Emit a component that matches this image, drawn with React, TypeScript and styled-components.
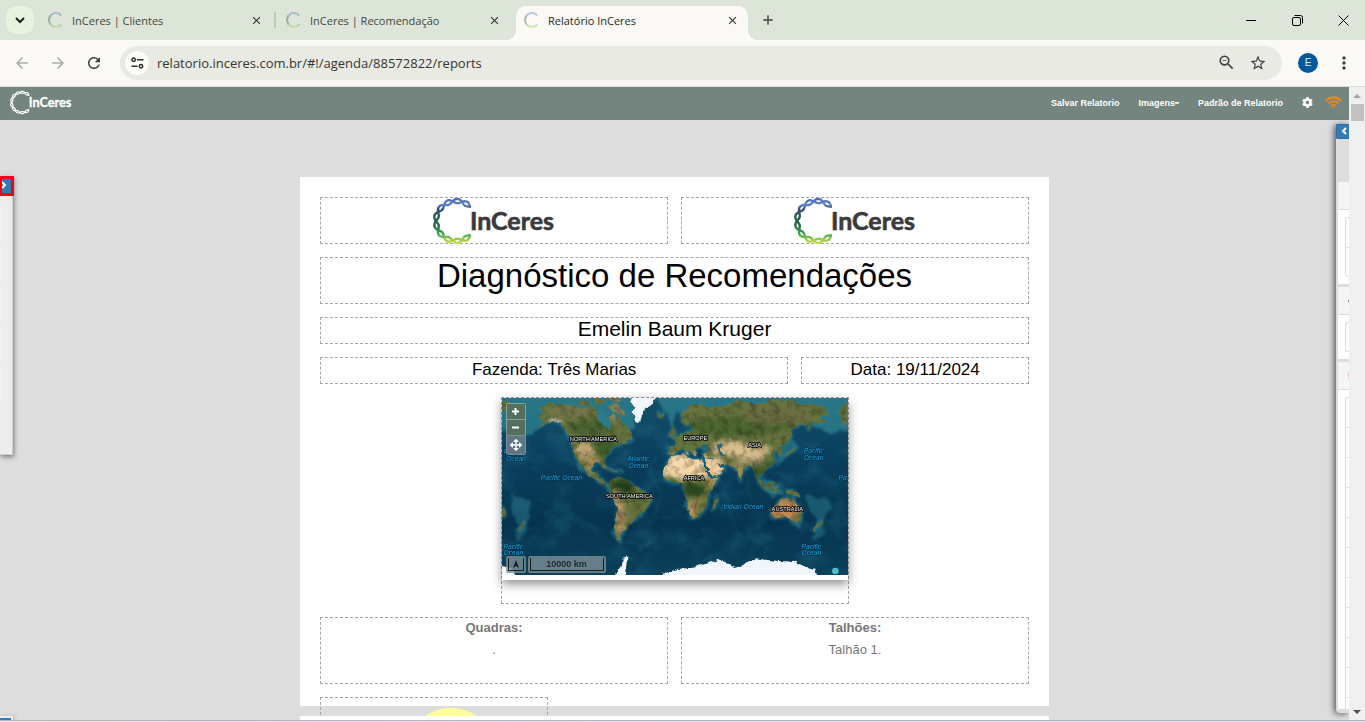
import React from "react";
import styled, { createGlobalStyle, css } from "styled-components";
import {
  MdAdd,
  MdArrowBack,
  MdArrowForward,
  MdClose,
  MdMoreVert,
  MdRefresh,
  MdStarBorder,
  MdZoomOut,
} from "react-icons/md";
import { FaArrowsAlt, FaCog } from "react-icons/fa";

const GlobalStyle = createGlobalStyle`
  * { box-sizing: border-box; }
  html, body, #root { height: 100%; }
  body {
    margin: 0;
    overflow: hidden;
    font-family: "Liberation Sans", Arial, sans-serif;
    color: #000;
  }
  button { margin: 0; padding: 0; border: 0; background: none; font: inherit; color: inherit; }
  h1, h2, h3, p { margin: 0; font-weight: 400; }
  svg { display: block; flex: none; }
`;

/* ---------- Browser chrome ---------- */

const Window = styled.div`
  display: flex;
  flex-direction: column;
  height: 100vh;
  background: #faf9f5;
`;

const TabStrip = styled.header`
  display: flex;
  align-items: flex-end;
  height: 40px;
  flex: none;
  background: #dde4d8;
  font-family: "Open Sans", "Noto Sans", sans-serif;
`;

const TabSearch = styled.button`
  display: grid;
  place-items: center;
  width: 28px;
  height: 28px;
  margin: 0 6px 6px;
  border-radius: 10px;
  background: #e7f3df;
  color: #1b1f1a;
`;

const Tab = styled.div<{ $active?: boolean; $divider?: boolean }>`
  position: relative;
  display: flex;
  align-items: center;
  width: 232px;
  height: 34px;
  margin-right: 6px;
  padding: 0 8px 6px;
  gap: 8px;
  font-size: 11px;
  color: #41483f;
  ${(p) =>
    p.$active &&
    css`
      color: #1f1f1f;
      background: #faf9f5;
      border-radius: 10px 10px 0 0;
      &::before,
      &::after {
        content: "";
        position: absolute;
        bottom: 0;
        width: 10px;
        height: 10px;
      }
      &::before {
        right: 100%;
        background: radial-gradient(circle at 0 0, transparent 10px, #faf9f5 10px);
      }
      &::after {
        left: 100%;
        background: radial-gradient(circle at 100% 0, transparent 10px, #faf9f5 10px);
      }
    `}
  ${(p) =>
    p.$divider &&
    css`
      &::after {
        content: "";
        position: absolute;
        right: -4px;
        top: 6px;
        width: 2px;
        height: 16px;
        background: #b9ccb1;
      }
    `}
`;

const TabTitle = styled.span`
  flex: 1;
  white-space: nowrap;
`;

const TabClose = styled.button`
  display: grid;
  place-items: center;
  width: 16px;
  height: 16px;
  color: #30352e;
`;

const NewTab = styled.button`
  display: grid;
  place-items: center;
  width: 28px;
  height: 28px;
  margin-bottom: 6px;
  color: #3b403a;
`;

const WindowControls = styled.div`
  display: flex;
  align-self: flex-start;
  margin-left: auto;
  margin-right: -1px;
`;

const WindowButton = styled.button`
  display: grid;
  place-items: center;
  width: 46px;
  height: 40px;
`;

const Toolbar = styled.div`
  display: flex;
  align-items: center;
  height: 47px;
  flex: none;
  padding: 0 3px 1px 4px;
  border-bottom: 1px solid #dcdcd8;
  background: #faf9f5;
`;

const ToolButton = styled.button<{ $muted?: boolean }>`
  display: grid;
  place-items: center;
  width: 36px;
  height: 32px;
  color: ${(p) => (p.$muted ? "#a9a9a5" : "#3f4340")};
`;

const Omnibox = styled.div`
  display: flex;
  align-items: center;
  flex: 1;
  height: 34px;
  margin: 0 8px;
  padding: 0 8px 0 5px;
  border-radius: 17px;
  background: #e9eae4;
`;

const SiteInfo = styled.button`
  display: grid;
  place-items: center;
  width: 24px;
  height: 24px;
  border-radius: 50%;
  background: #fbfbf8;
`;

const Address = styled.input`
  flex: 1;
  min-width: 0;
  margin-left: 8px;
  padding: 0;
  border: 0;
  outline: 0;
  background: transparent;
  font-family: "Open Sans", "Noto Sans", sans-serif;
  font-size: 13px;
  line-height: 20px;
  color: #34372f;
`;

const OmniButton = styled(ToolButton)`
  width: 32px;
`;

const Avatar = styled.button`
  width: 20px;
  height: 20px;
  margin: 0 8px;
  border-radius: 50%;
  background: #00599f;
  color: #e6eef6;
  font-size: 10px;
  line-height: 20px;
  text-align: center;
`;

/* ---------- Report application ---------- */

const Viewport = styled.div`
  display: flex;
  flex: 1;
  min-height: 0;
`;

const AppArea = styled.div`
  position: relative;
  display: flex;
  flex-direction: column;
  flex: 1;
  min-width: 0;
  overflow: hidden;
  background: #dddddd;
`;

const AppBar = styled.nav`
  display: flex;
  align-items: center;
  justify-content: space-between;
  height: 33px;
  flex: none;
  padding: 0 7px 2px 10px;
  background: #74847e;
`;

const NavGroup = styled.div`
  display: flex;
  align-items: center;
  gap: 19px;
`;

const NavLink = styled.a`
  display: flex;
  align-items: center;
  color: #fff;
  font-size: 9px;
  font-weight: 700;
  text-decoration: none;
  white-space: nowrap;
`;

const Caret = styled.span`
  width: 4px;
  height: 2px;
  background: linear-gradient(#fff, #c5cbc9);
`;

const NavIcons = styled.div`
  display: flex;
  align-items: center;
  gap: 12px;
  color: #fff;
`;

const Desk = styled.main`
  display: flex;
  flex-direction: column;
  align-items: center;
  gap: 10px;
  flex: 1;
  min-height: 0;
  padding-top: 57px;
`;

const Sheet = styled.section`
  position: relative;
  flex: none;
  width: 100%;
  max-width: 749px;
  height: 529px;
  padding: 20px;
  background: #fff;
`;

const SheetGrid = styled.div`
  display: grid;
  grid-template-columns: repeat(12, 1fr);
  gap: 13px;
`;

const Block = styled.div<{ $span: number; $height: number; $start?: number }>`
  grid-column: ${(p) => (p.$start ? p.$start + " / " : "")} span ${(p) => p.$span};
  height: ${(p) => p.$height}px;
  border: 1px dashed #a6a6a6;
  text-align: center;
`;

const LogoBlock = styled(Block)`
  display: flex;
  justify-content: center;
`;

const ReportTitle = styled.h1`
  font-size: 33px;
  line-height: 35px;
`;

const ClientName = styled.h2`
  font-size: 21px;
  line-height: 21px;
`;

const Fact = styled.p`
  font-size: 17px;
  line-height: 23px;
`;

const ListTitle = styled.h3`
  font-size: 13px;
  line-height: 20px;
  font-weight: 700;
  color: #777;
`;

const ListItem = styled.p`
  font-size: 13px;
  line-height: 24px;
  color: #777;
`;

const ChartBlock = styled(Block)`
  display: flex;
  justify-content: center;
  padding: 10px 0 0 34px;
`;

/* ---------- Map ---------- */

const MapCard = styled.div`
  position: relative;
  padding-bottom: 5px;
  background: #fff;
  box-shadow: 0 4px 10px rgba(0, 0, 0, 0.45);
`;

const MapImage = styled.svg`
  width: 100%;
  height: 177px;
`;

const ZoomControls = styled.div`
  position: absolute;
  left: 4px;
  top: 5px;
  display: flex;
  flex-direction: column;
  align-items: center;
  width: 20px;
  gap: 1px;
  padding: 1px;
  border-radius: 3px;
  background: rgba(190, 200, 180, 0.6);
`;

const MapButton = styled.button`
  display: grid;
  place-items: center;
  width: 18px;
  height: 15px;
  background: #53705f;
  color: #fff;
  &:last-child {
    height: 18px;
    background: #5f7785;
  }
`;

const MapFooter = styled.div`
  position: absolute;
  left: 4px;
  bottom: 7px;
  display: flex;
  gap: 2px;
  font-size: 9px;
  font-weight: 700;
  color: #222b2e;
`;

const MapBadge = styled.div<{ $wide?: boolean }>`
  display: grid;
  width: ${(p) => (p.$wide ? 78 : 20)}px;
  height: 17px;
  padding: 2px;
  border-radius: 2px;
  background: rgba(125, 143, 150, 0.8);
  > span {
    display: grid;
    place-items: center;
    border: 1px solid #1b1f20;
    border-top: 0;
    line-height: 12px;
  }
`;

/* ---------- Drawers and scroll bar ---------- */

const LeftDrawer = styled.aside`
  position: absolute;
  left: 0;
  top: 89px;
  width: 13px;
  height: 279px;
  padding-top: 31px;
  border-right: 1px solid #cfcfcf;
  border-bottom: 1px solid #cfcfcf;
  background: #ededed;
  box-shadow: 1px 2px 5px rgba(0, 0, 0, 0.45);
`;

const LeftToggle = styled.button`
  position: absolute;
  left: 0;
  top: 0;
  display: flex;
  align-items: center;
  width: 14px;
  height: 20px;
  padding-bottom: 3px;
  border: 3px solid #f60010;
  border-left-width: 2px;
  background: #337ab7;
  color: #fff;
`;

const DrawerSlot = styled.div`
  width: 2px;
  height: 34px;
  margin-bottom: 6px;
  border-right: 1px solid #f6f6f6;
`;

const BottomDrawer = styled.aside`
  position: absolute;
  left: 0;
  bottom: 0;
  width: 13px;
  height: 4px;
  padding: 2px 2px 0 0;
  background: #eee;
  box-shadow: 1px 1px 4px rgba(0, 0, 0, 0.3);
  &::before {
    content: "";
    display: block;
    height: 2px;
    background: #337ab7;
  }
`;

const RightDrawer = styled.aside`
  position: absolute;
  right: 0;
  top: 37px;
  bottom: 7px;
  display: flex;
  flex-direction: column;
  width: 13px;
  padding-left: 2px;
  padding-bottom: 4px;
  border-radius: 3px 0 0 4px;
  background: #dddddd;
  box-shadow: -2px 1px 6px rgba(0, 0, 0, 0.6);
`;

const RightToggle = styled.button`
  display: grid;
  place-items: center;
  width: 13px;
  height: 15px;
  margin: 0 0 43px -2px;
  padding: 0 0 2px 2px;
  flex: none;
  border: 1px solid #2e6da4;
  border-right: 0;
  border-radius: 2px 0 0 2px;
  background: #337ab7;
  color: #fff;
`;

const PanelHead = styled.div`
  display: flex;
  align-items: center;
  justify-content: flex-end;
  height: 28px;
  flex: none;
  border-bottom: 1px solid #ddd;
  background: #f5f5f5;
`;

const HeadMark = styled.span<{ $tall?: boolean }>`
  width: 1px;
  height: ${(p) => (p.$tall ? 7 : 2)}px;
  background: ${(p) => (p.$tall ? "#f0c8c8" : "#8a8a9a")};
`;

const PanelBody = styled.div<{ $grow?: boolean }>`
  flex: ${(p) => (p.$grow ? 1 : "none")};
  min-height: 0;
  overflow: hidden;
  padding: 7px 0 ${(p) => (p.$grow ? 0 : 7)}px 7px;
  margin-bottom: ${(p) => (p.$grow ? 0 : 3)}px;
  background: #fff;
`;

const PanelItem = styled.div`
  height: 30px;
  border: 1px solid #ddd;
  border-right: 0;
  border-bottom-width: 0;
  &:first-child { border-top-left-radius: 3px; }
  &:last-child { border-bottom-width: 1px; border-bottom-left-radius: 3px; }
`;

const ScrollBar = styled.div`
  display: flex;
  flex-direction: column;
  align-items: center;
  width: 16px;
  flex: none;
  background: #f0f0f0;
`;

const ScrollButton = styled.button`
  display: grid;
  place-items: center;
  width: 16px;
  height: 17px;
`;

const ScrollThumb = styled.div`
  width: 13px;
  height: 17px;
  margin-bottom: auto;
  background: #c1c1c1;
`;

const TaskbarEdge = styled.div`
  height: 2px;
  flex: none;
  border-top: 1px solid #adb7c9;
  background: linear-gradient(90deg, #f3e4da, #ecd9e4 30%, #dbe6f3 50%, #dbe6f3);
`;

/* ---------- Drawings ---------- */

type ChevronProps = { d: string; width: number; height: number; weight?: number };

function Chevron({ d, width, height, weight = 2 }: ChevronProps) {
  return (
    <svg width={width} height={height} fill="none" stroke="currentColor" strokeWidth={weight} aria-hidden="true">
      <path d={d} />
    </svg>
  );
}

// One strand of the double helix that bends round the logo's open ring.
function strand(phase: number) {
  const points: string[] = [];
  for (let i = 0; i <= 90; i++) {
    const t = i / 90;
    const angle = ((-46 - t * 268) * Math.PI) / 180;
    const r = 20 + 2.2 * Math.sin(t * Math.PI * 10 + phase);
    points.push(`${(23 + r * Math.cos(angle)).toFixed(2)} ${(23 + r * Math.sin(angle)).toFixed(2)}`);
  }
  return "M" + points.join("L");
}
const STRANDS = [strand(0), strand(Math.PI)];

function Ring({ id, mono, weight }: { id: string; mono?: boolean; weight: number }) {
  return (
    <g fill="none" stroke={mono ? "#fff" : `url(#${id})`} strokeWidth={weight} strokeLinecap="round">
      {!mono && (
        <linearGradient id={id} gradientUnits="userSpaceOnUse" x1="16" y1="0" x2="16" y2="46">
          <stop offset="0" stopColor="#4e6cb4" />
          <stop offset="0.14" stopColor="#5f86c8" />
          <stop offset="0.24" stopColor="#3a4f78" />
          <stop offset="0.4" stopColor="#2a5c50" />
          <stop offset="0.6" stopColor="#256a40" />
          <stop offset="0.78" stopColor="#3dac5a" />
          <stop offset="0.9" stopColor="#9dca48" />
          <stop offset="1" stopColor="#cfe04a" />
        </linearGradient>
      )}
      {STRANDS.map((d) => (
        <path key={d} d={d} />
      ))}
    </g>
  );
}

function Logo({ id, mono, width, height }: { id: string; mono?: boolean; width: number; height: number }) {
  return (
    <svg width={width} height={height} viewBox="0 0 122 46" role="img" aria-label="InCeres">
      <Ring id={id} mono={mono} weight={2.4} />
      <text
        x="37"
        y="32"
        fontFamily="Lato, sans-serif"
        fontWeight="700"
        fontSize="25"
        fill={mono ? "#fff" : "#3a3a3a"}
        stroke={mono ? "#fff" : "#3a3a3a"}
        strokeWidth="0.6"
        strokeLinejoin="round"
      >
        InCeres
      </text>
    </svg>
  );
}

function Favicon({ id }: { id: string }) {
  return (
    <svg width="16" height="16" viewBox="0 0 46 46" opacity="0.75" aria-hidden="true">
      <Ring id={id} weight={2} />
    </svg>
  );
}

function WifiIcon() {
  return (
    <svg width="17" height="13" viewBox="0 0 17 13" fill="none" stroke="#d98b22" strokeWidth="2" aria-hidden="true">
      <path d="M0.8 4.6C5 0.4 12 0.4 16.2 4.6" strokeWidth="2.4" />
      <path d="M3.3 7.4C6.2 4.6 10.8 4.6 13.7 7.4" />
      <path d="M5.8 10C7.4 8.5 9.6 8.5 11.2 10" />
      <circle cx="8.5" cy="11.6" r="1" fill="#d98b22" stroke="none" />
    </svg>
  );
}

const LAND = {
  northAmerica:
    "M140 92L158 84 144 70 172 52 214 60 250 58 275 72 298 64 318 74 322 104 336 118 352 124 358 138 362 116 354 100 362 86 384 98 394 116 410 126 420 148 426 164 404 166 408 176 392 172 376 182 364 190 354 206 342 216 340 232 344 246 336 250 328 234 314 230 304 240 300 256 306 268 318 262 324 268 320 280 336 284 344 298 360 302 352 308 330 294 302 276 286 264 274 244 262 222 272 250 262 238 250 206 244 184 240 160 226 140 208 116 188 108 168 116 146 126 160 110Z",
  arcticIslands:
    "M262 52L280 46 300 50 296 60 272 62ZM308 44L324 40 344 48 338 58 316 56ZM350 62L372 54 394 70 404 92 392 96 378 82 362 78ZM344 39L398 39 384 50 356 48Z",
  southAmerica:
    "M360 290L374 278 394 280 414 290 428 304 450 314 484 334 476 356 464 376 440 392 426 414 410 420 398 440 388 458 390 472 376 462 370 440 374 404 380 370 372 350 358 328 354 314Z",
  africa:
    "M540 212L528 234 514 262 520 282 546 294 576 290 580 320 586 350 592 376 602 400 622 396 646 364 650 334 666 304 684 278 658 280 646 254 632 222 604 224 592 218 582 208Z",
  arabia: "M640 218L664 218 680 236 702 250 690 266 662 276 650 252Z",
  eurasia:
    "M532 188L534 208 550 206 562 194 576 192 590 210 594 204 586 192 602 202 612 214 618 204 610 194 624 186 648 190 652 200 634 204 642 220 668 224 684 238 706 236 722 242 736 252 750 286 758 256 776 240 786 252 800 290 806 284 802 266 816 268 834 246 852 226 846 204 858 196 866 214 872 196 868 184 886 174 904 152 900 132 924 122 950 112 952 134 962 116 1002 112 982 92 1014 88 1008 72 976 58 936 56 896 46 844 46 800 58 742 44 700 62 654 66 630 56 600 58 576 84 570 108 584 122 600 104 596 124 610 132 590 140 562 150 546 160 556 170 552 184Z",
  australia:
    "M838 376L860 352 876 342 890 336 898 352 906 336 916 356 934 378 932 404 916 416 900 404 882 394 858 400 842 398Z",
  islands:
    "M536 152L546 124 556 150ZM665 370L670 346 680 336 678 356 670 374ZM796 274L818 296 830 314 820 312 802 290ZM826 304L836 290 850 292 846 310 832 314ZM852 306L864 298 860 316 854 320ZM884 316L904 316 928 334 910 332 890 326ZM826 318L860 324 850 328ZM878 210L896 200 906 186 908 196 894 210ZM966 434L980 420 992 406 996 412 980 430 970 438ZM914 420L922 418 922 428ZM80 434L92 418 102 404 106 410 94 430 84 438ZM500 86L520 86 516 98 502 96ZM33 366L42 376 38 392 33 398ZM1036 82L1056 84 1044 70 1071 54 1071 112 1050 124 1056 104ZM33 54L52 48 58 62 44 74 33 78ZM346 250L374 258 392 266 378 264 356 256Z",
};
const LAND_PATH = Object.values(LAND).join("");

const ICE_PATH =
  "M424 20L500 20 486 56 466 68 456 84 444 118 432 102 424 84 434 70 420 52ZM0 538L60 548 90 600 0 600ZM350 600L388 546 396 522 408 508 410 532 400 600ZM506 600L516 566 560 552 604 548 660 532 684 524 704 532 734 548 770 530 796 520 820 524 864 528 912 530 944 546 970 554 990 600Z";

const PATCHES: [number, number, number, number, string, number][] = [
  [280, 196, 32, 28, "#c4a676", 0.95],
  [306, 238, 22, 24, "#b5945f", 0.85],
  [344, 186, 34, 30, "#3d5a28", 0.9],
  [300, 130, 70, 24, "#44602f", 0.8],
  [240, 78, 70, 16, "#7d7650", 0.7],
  [375, 74, 40, 34, "#8d8463", 0.8],
  [190, 110, 24, 8, "#e8e6dc", 0.8],
  [394, 304, 36, 22, "#24401d", 0.95],
  [446, 336, 22, 22, "#566b34", 0.8],
  [390, 410, 14, 60, "#b89468", 0.9],
  [376, 356, 8, 50, "#d4ad82", 0.8],
  [590, 244, 92, 38, "#f6d8aa", 1],
  [672, 246, 34, 28, "#f2d2a2", 1],
  [608, 314, 34, 22, "#2b4a20", 0.95],
  [614, 358, 24, 20, "#8e8048", 0.7],
  [600, 374, 16, 24, "#d4a06c", 0.9],
  [664, 286, 16, 16, "#c99c64", 0.8],
  [716, 190, 54, 24, "#dcbe90", 0.95],
  [786, 200, 56, 24, "#e0c292", 0.95],
  [774, 224, 40, 12, "#c4ab84", 0.9],
  [740, 258, 22, 22, "#a8935c", 0.8],
  [740, 124, 150, 30, "#46622c", 0.8],
  [850, 92, 110, 28, "#6d6d42", 0.8],
  [840, 222, 24, 26, "#566f38", 0.8],
  [806, 262, 24, 20, "#355523", 0.8],
  [590, 166, 46, 20, "#5c7440", 0.8],
  [884, 374, 46, 30, "#c98a58", 0.95],
  [924, 398, 12, 28, "#68713c", 0.8],
];

const OCEAN_LABELS: [number, number, string][] = [
  [442, 228, "Atlantic"],
  [442, 248, "Ocean"],
  [211, 284, "Pacific Ocean"],
  [68, 207, "Pacific"],
  [75, 227, "Ocean"],
  [67, 491, "Pacific"],
  [67, 511, "Ocean"],
  [757, 372, "Indian Ocean"],
  [968, 204, "Pacific"],
  [968, 224, "Ocean"],
  [961, 491, "Pacific"],
  [961, 511, "Ocean"],
  [1055, 284, "Pa"],
];

const LAND_LABELS: [number, number, string][] = [
  [307, 169, "NORTH AMERICA"],
  [415, 340, "SOUTH AMERICA"],
  [613, 165, "EUROPE"],
  [609, 285, "AFRICA"],
  [791, 186, "ASIA"],
  [889, 379, "AUSTRALIA"],
];

function WorldMap() {
  return (
    <MapImage viewBox="33 39 1038 531" preserveAspectRatio="none" role="img" aria-label="Mapa">
      <defs>
        <linearGradient id="sea" x1="0" y1="0" x2="0" y2="1">
          <stop offset="0" stopColor="#14506a" />
          <stop offset="0.25" stopColor="#0b4260" />
          <stop offset="0.7" stopColor="#063450" />
          <stop offset="1" stopColor="#0b3f58" />
        </linearGradient>
        <filter id="coast" x="-5%" y="-5%" width="110%" height="110%" colorInterpolationFilters="sRGB">
          <feTurbulence type="fractalNoise" baseFrequency="0.06" numOctaves="3" seed="4" />
          <feDisplacementMap in="SourceGraphic" scale="14" xChannelSelector="R" yChannelSelector="G" />
        </filter>
        <filter id="soft" x="-20%" y="-20%" width="140%" height="140%" colorInterpolationFilters="sRGB">
          <feGaussianBlur stdDeviation="7" />
        </filter>
        <filter id="shelf" x="-10%" y="-10%" width="120%" height="120%" colorInterpolationFilters="sRGB">
          <feTurbulence type="fractalNoise" baseFrequency="0.03" numOctaves="3" seed="9" result="n" />
          <feDisplacementMap in="SourceGraphic" in2="n" scale="24" xChannelSelector="R" yChannelSelector="G" />
          <feGaussianBlur stdDeviation="3" />
        </filter>
        <filter id="relief" x="0" y="0" width="100%" height="100%" colorInterpolationFilters="sRGB">
          <feTurbulence type="fractalNoise" baseFrequency="0.045" numOctaves="4" seed="12" />
          <feColorMatrix values="0 0 0 0 0.08  0 0 0 0 0.12  0 0 0 0 0.05  2.6 0 0 0 -1.1" />
        </filter>
        <filter id="seabed" x="0" y="0" width="100%" height="100%" colorInterpolationFilters="sRGB">
          <feTurbulence type="fractalNoise" baseFrequency="0.012 0.016" numOctaves="5" seed="21" />
          <feColorMatrix values="0 0 0 0 0.13  0 0 0 0 0.42  0 0 0 0 0.52  3 0 0 0 -1.4" />
        </filter>
        <clipPath id="land">
          <path d={LAND_PATH} />
        </clipPath>
      </defs>
      <rect x="33" y="39" width="1038" height="531" fill="url(#sea)" />
      <rect x="33" y="39" width="1038" height="531" filter="url(#seabed)" opacity="0.35" />
      <g filter="url(#shelf)" fill="#2c7b8c" stroke="#2c7b8c" strokeLinejoin="round">
        <path d={LAND_PATH} strokeWidth="8" opacity="0.7" />
        <path
          stroke="none"
          d="M10 20L430 20 430 130 380 150 330 130 250 100 170 118 110 152 60 140 10 130ZM490 20L1090 20 1090 130 1020 150 960 120 900 100 600 110 560 80 540 130 530 90Z"
          opacity="0.85"
        />
        <path d="M480 470L440 490 450 478 400 470" fill="none" strokeWidth="6" opacity="0.4" />
        <path stroke="none" d="M870 180L900 150 920 190 880 220 850 250 860 210ZM800 270L850 290 880 330 830 320Z" opacity="0.7" />
        <path
          stroke="none"
          d="M940 330L1010 340 1016 370 1000 400 1000 440 960 470 970 430 980 400 950 370ZM60 330L124 345 110 380 110 440 74 470 84 420 60 380Z"
          opacity="0.5"
        />
        <path d="M690 290L710 360 730 420 760 460M770 280L776 350M500 180L480 260 510 330 490 400" fill="none" strokeWidth="4" opacity="0.3" />
      </g>
      <g filter="url(#coast)">
        <path d={LAND_PATH} fill="#68743f" />
        <g clipPath="url(#land)">
          <g filter="url(#soft)">
            {PATCHES.map(([cx, cy, rx, ry, fill, o], i) => (
              <ellipse key={i} cx={cx} cy={cy} rx={rx} ry={ry} fill={fill} opacity={o} />
            ))}
          </g>
          <rect x="33" y="39" width="1038" height="531" filter="url(#relief)" opacity="0.35" />
        </g>
        <path d="M318 74L340 80 356 100 360 134 340 122 322 104Z" fill="#2c7b8c" />
        <path d="M626 186L640 178 658 184 652 194 630 196ZM680 176L692 172 690 196 700 212 688 212 682 194Z" fill="#2a6678" />
        <path d="M638 222L652 250 662 278 654 278 642 248ZM680 234L700 246 690 248Z" fill="#155871" />
      </g>
      <path d={ICE_PATH} fill="#f1f5fc" filter="url(#coast)" />
      <circle cx="1033" cy="558" r="10" fill="#54bccb" />
      <g
        fontFamily="Liberation Sans, Arial, sans-serif"
        fontSize="20"
        textAnchor="middle"
        strokeWidth="3"
        style={{ paintOrder: "stroke" }}
      >
        <g fontStyle="italic" fill="#18a6e6" stroke="#06283c">
          {OCEAN_LABELS.map(([x, y, label], i) => (
            <text key={i} x={x} y={y}>
              {label}
            </text>
          ))}
        </g>
        <g fontSize="17" fill="#fff" stroke="#000" strokeWidth="5">
          {LAND_LABELS.map(([x, y, label]) => (
            <text key={label} x={x} y={y}>
              {label}
            </text>
          ))}
        </g>
      </g>
    </MapImage>
  );
}

const TABS = [
  { id: "fav-1", title: "InCeres | Clientes", divider: true },
  { id: "fav-2", title: "InCeres | Recomendação" },
  { id: "fav-3", title: "Relatório InCeres", active: true },
];

export default function App() {
  return (
    <Window>
      <GlobalStyle />
      <TabStrip>
        <TabSearch aria-label="Pesquisar guias">
          <Chevron d="M1 1L5 5L9 1" width={10} height={7} />
        </TabSearch>
        {TABS.map((tab) => (
          <Tab key={tab.id} $active={tab.active} $divider={tab.divider}>
            <Favicon id={tab.id} />
            <TabTitle>{tab.title}</TabTitle>
            <TabClose aria-label="Fechar guia">
              <MdClose size={13} stroke="currentColor" />
            </TabClose>
          </Tab>
        ))}
        <NewTab aria-label="Nova guia">
          <MdAdd size={16} />
        </NewTab>
        <WindowControls>
          <WindowButton aria-label="Minimizar">
            <svg width="10" height="10" stroke="#000">
              <path d="M0 5.5H10" />
            </svg>
          </WindowButton>
          <WindowButton aria-label="Restaurar">
            <svg width="11" height="11" fill="none" stroke="#000">
              <rect x="0.5" y="2.5" width="8" height="8" rx="1.5" />
              <path d="M2.5 0.5H8.5A2 2 0 0 1 10.5 2.5V8.5" />
            </svg>
          </WindowButton>
          <WindowButton aria-label="Fechar">
            <svg width="11" height="11" stroke="#000">
              <path d="M0.5 0.5L10.5 10.5M10.5 0.5L0.5 10.5" />
            </svg>
          </WindowButton>
        </WindowControls>
      </TabStrip>

      <Toolbar>
        <ToolButton $muted aria-label="Voltar">
          <MdArrowBack size={18} />
        </ToolButton>
        <ToolButton $muted aria-label="Avançar">
          <MdArrowForward size={18} />
        </ToolButton>
        <ToolButton aria-label="Recarregar">
          <MdRefresh size={18} />
        </ToolButton>
        <Omnibox>
          <SiteInfo aria-label="Informações do site">
            <svg width="13" height="12" fill="none" stroke="#2b2e2a" strokeWidth="2">
              <circle cx="2.6" cy="2.8" r="1.7" strokeWidth="1.5" />
              <path d="M6 2.8H12.5M0.5 9.2H6.5" strokeWidth="1.6" />
              <circle cx="10" cy="9.2" r="1.7" strokeWidth="1.5" />
            </svg>
          </SiteInfo>
          <Address aria-label="Endereço" defaultValue="relatorio.inceres.com.br/#!/agenda/88572822/reports" />
          <OmniButton aria-label="Zoom">
            <MdZoomOut size={19} />
          </OmniButton>
          <OmniButton aria-label="Favoritar">
            <MdStarBorder size={18} />
          </OmniButton>
        </Omnibox>
        <Avatar aria-label="Perfil">E</Avatar>
        <ToolButton aria-label="Menu">
          <MdMoreVert size={20} />
        </ToolButton>
      </Toolbar>

      <Viewport>
        <AppArea>
          <AppBar>
            <a href="#inicio">
              <Logo id="logo-bar" mono width={62} height={27} />
            </a>
            <NavGroup>
              <NavLink href="#salvar">Salvar Relatorio</NavLink>
              <NavLink href="#imagens">
                Imagens
                <Caret />
              </NavLink>
              <NavLink href="#padrao">Padrão de Relatorio</NavLink>
              <NavIcons>
                <FaCog size={11} />
                <WifiIcon />
              </NavIcons>
            </NavGroup>
          </AppBar>

          <Desk>
            <Sheet>
              <SheetGrid>
                <LogoBlock $span={6} $height={47}>
                  <Logo id="logo-left" width={122} height={46} />
                </LogoBlock>
                <LogoBlock $span={6} $height={47}>
                  <Logo id="logo-right" width={122} height={46} />
                </LogoBlock>
                <Block $span={12} $height={47}>
                  <ReportTitle>Diagnóstico de Recomendações</ReportTitle>
                </Block>
                <Block $span={12} $height={27}>
                  <ClientName>Emelin Baum Kruger</ClientName>
                </Block>
                <Block $span={8} $height={27}>
                  <Fact>Fazenda: Três Marias</Fact>
                </Block>
                <Block $span={4} $height={27}>
                  <Fact>Data: 19/11/2024</Fact>
                </Block>
                <Block $span={6} $start={4} $height={207}>
                  <MapCard>
                    <WorldMap />
                    <ZoomControls>
                      <MapButton aria-label="Aproximar">
                        <svg width="7" height="7" stroke="#fff" strokeWidth="2">
                          <path d="M0 3.5H7M3.5 0V7" />
                        </svg>
                      </MapButton>
                      <MapButton aria-label="Afastar">
                        <svg width="7" height="7" stroke="#fff" strokeWidth="2">
                          <path d="M0 3.5H7" />
                        </svg>
                      </MapButton>
                      <MapButton aria-label="Enquadrar">
                        <FaArrowsAlt size={12} />
                      </MapButton>
                    </ZoomControls>
                    <MapFooter>
                      <MapBadge>
                        <span>
                          <svg width="6" height="8" fill="#1b1f20">
                            <path d="M3 0L6 8L3 6L0 8Z" />
                          </svg>
                        </span>
                      </MapBadge>
                      <MapBadge $wide>
                        <span>10000 km</span>
                      </MapBadge>
                    </MapFooter>
                  </MapCard>
                </Block>
                <Block $span={6} $height={67}>
                  <ListTitle>Quadras:</ListTitle>
                  <ListItem>.</ListItem>
                </Block>
                <Block $span={6} $height={67}>
                  <ListTitle>Talhões:</ListTitle>
                  <ListItem>Talhão 1.</ListItem>
                </Block>
                <ChartBlock $span={4} $height={107}>
                  <svg width="92" height="92">
                    <circle cx="46" cy="46" r="46" fill="#ffff99" />
                  </svg>
                </ChartBlock>
              </SheetGrid>
            </Sheet>
            <Sheet />
          </Desk>

          <LeftDrawer>
            {[0, 1, 2, 3, 4].map((n) => (
              <DrawerSlot key={n} />
            ))}
            <LeftToggle aria-label="Abrir painel esquerdo">
              <Chevron d="M0 1L3 4L0 7" width={5} height={8} />
            </LeftToggle>
          </LeftDrawer>
          <BottomDrawer />
          <RightDrawer>
            <RightToggle aria-label="Abrir painel direito">
              <Chevron d="M5 1L2 4L5 7" width={6} height={8} />
            </RightToggle>
            <PanelHead />
            <PanelBody>
              <PanelItem />
              <PanelItem />
            </PanelBody>
            <PanelHead>
              <HeadMark />
            </PanelHead>
            <PanelBody>
              <PanelItem />
            </PanelBody>
            <PanelHead>
              <HeadMark $tall />
            </PanelHead>
            <PanelBody $grow>
              {Array.from({ length: 11 }, (_, n) => (
                <PanelItem key={n} />
              ))}
            </PanelBody>
          </RightDrawer>
        </AppArea>
        <ScrollBar>
          <ScrollButton aria-label="Rolar para cima">
            <svg width="8" height="4" fill="#a3a3a3">
              <path d="M4 0L8 4H0Z" />
            </svg>
          </ScrollButton>
          <ScrollThumb />
          <ScrollButton aria-label="Rolar para baixo">
            <svg width="8" height="4" fill="#505050">
              <path d="M0 0H8L4 4Z" />
            </svg>
          </ScrollButton>
        </ScrollBar>
      </Viewport>
      <TaskbarEdge />
    </Window>
  );
}
